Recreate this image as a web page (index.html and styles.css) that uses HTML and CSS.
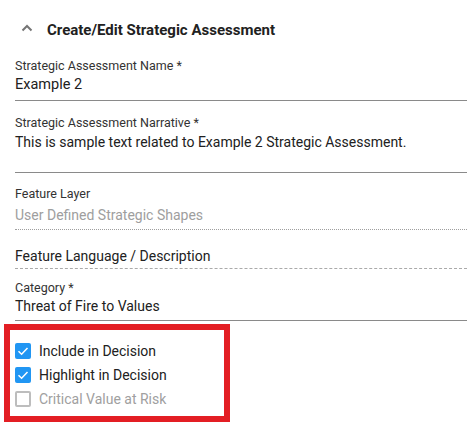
FILE: index.html
```html
<!DOCTYPE html>
<html>
<head>
<meta charset="utf-8">
<link rel="stylesheet" href="styles.css">
</head>
<body>
<div class="panel">
  <div class="panel-header">
    <svg class="chevron" width="12" height="8" viewBox="0 0 12 8"><path d="M1.5 6.5 L6 2 L10.5 6.5" fill="none" stroke="#757575" stroke-width="2"/></svg>
    <span class="panel-title">Create/Edit Strategic Assessment</span>
  </div>
  <div class="form">
    <div class="field f-name">
      <div class="label">Strategic Assessment Name *</div>
      <div class="value big">Example 2</div>
    </div>
    <div class="field f-narr">
      <div class="label">Strategic Assessment Narrative *</div>
      <div class="value">This is sample text related to Example 2 Strategic Assessment.</div>
    </div>
    <div class="field f-layer dotted">
      <div class="label">Feature Layer</div>
      <div class="value disabled">User Defined Strategic Shapes</div>
    </div>
    <div class="field f-lang dashed">
      <div class="value">Feature Language / Description</div>
    </div>
    <div class="field f-cat">
      <div class="label">Category *</div>
      <div class="value">Threat of Fire to Values</div>
    </div>
    <div class="checks">
      <label class="check">
        <span class="box on"><svg width="16" height="16" viewBox="0 0 16 16"><path d="M3.5 8.2 L6.6 11.2 L12.5 5" fill="none" stroke="#fff" stroke-width="1.5"/></svg></span>
        <span class="check-label">Include in Decision</span>
      </label>
      <label class="check">
        <span class="box on"><svg width="16" height="16" viewBox="0 0 16 16"><path d="M3.5 8.2 L6.6 11.2 L12.5 5" fill="none" stroke="#fff" stroke-width="1.5"/></svg></span>
        <span class="check-label">Highlight in Decision</span>
      </label>
      <label class="check">
        <span class="box off"></span>
        <span class="check-label muted">Critical Value at Risk</span>
      </label>
    </div>
  </div>
</div>
</body>
</html>
```
FILE: styles.css
```css
* { box-sizing: border-box; }
body {
  margin: 0;
  background: #fff;
  font-family: Roboto, "Liberation Sans", sans-serif;
  color: rgba(0,0,0,0.87);
}
.panel-header {
  height: 59px;
  display: flex;
  align-items: center;
  padding-left: 21px;
}
.chevron { display: block; margin-right: 14px; margin-top: -3px; }
.panel-title {
  font-size: 15px;
  font-weight: 700;
  color: #212121;
}
.form { padding-left: 15px; }
.field { border-bottom: 1px solid #8a8a8a; }
.label {
  font-size: 12.5px;
  line-height: 14px;
  color: #333;
}
.value {
  font-size: 14px;
  line-height: 20px;
  color: #212121;
}
.value.big { font-size: 14.5px; }
.value.disabled { color: #9e9e9e; }
.f-name .value { margin-top: 2px; padding-bottom: 5px; }
.f-narr { margin-top: 15px; }
.f-narr .value { margin-top: 2px; padding-bottom: 20px; }
.dotted { border-bottom: 1px dotted #9e9e9e; margin-top: 14px; }
.f-layer .value { margin-top: 4px; padding-bottom: 4px; }
.dashed { border-bottom: 1px dashed #aaa; margin-top: 16px; }
.f-lang .value { padding-bottom: 2px; }
.f-cat { margin-top: 12px; }
.f-cat .value { margin-top: 1px; padding-bottom: 4px; }
.checks {
  margin: 3px 0 0 -11px;
  width: 226px;
  height: 98px;
  border: 6px solid #e31e24;
  padding: 13px 0 0 5px;
  display: flex;
  flex-direction: column;
  gap: 8px;
}
.check {
  display: flex;
  align-items: center;
  height: 16px;
}
.box {
  width: 16px;
  height: 16px;
  border-radius: 2px;
  display: block;
  margin-right: 8px;
}
.box svg { display: block; }
.box.on { background: #2196f3; }
.box.off { border: 2px solid #bdbdbd; }
.check-label { font-size: 14px; color: #212121; }
.check-label.muted { color: #a0a0a0; }
```
